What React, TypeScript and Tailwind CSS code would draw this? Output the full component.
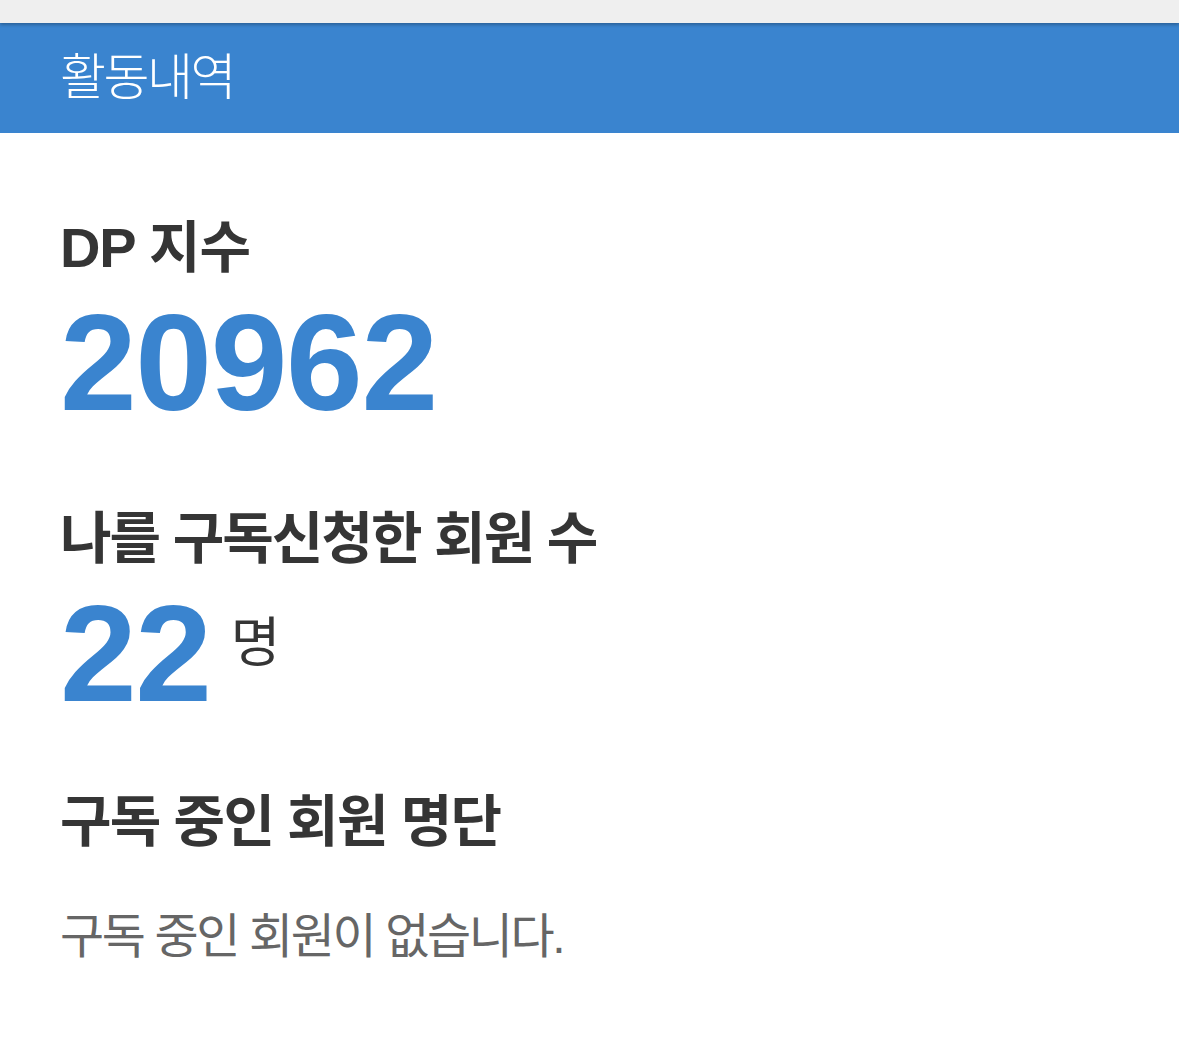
import React from 'react';

const font = { fontFamily: '"Liberation Sans", "Noto Sans CJK KR", sans-serif' };

const App: React.FC = () => {
  return (
    <div className="min-h-screen bg-white" style={font}>
      {/* top strip */}
      <div className="h-[23px] bg-[#efefef] shadow-[0_2px_3px_rgba(0,0,0,0.25)] relative z-10" />

      {/* Header */}
      <div className="h-[110px] bg-[#3a84cf] flex items-center px-[60px]">
        <h1 className="text-white text-[50px] font-light leading-none tracking-[-0.05em]">활동내역</h1>
      </div>

      <div className="px-[60px] pt-[87px]">
        <h2 className="text-[#353535] text-[56px] font-bold leading-none tracking-[-0.02em]">DP 지수</h2>
        <div className="text-[#3a84cf] text-[138px] font-bold leading-none mt-[17px] tracking-[-0.01em]">20962</div>

        <h2 className="text-[#353535] text-[56px] font-bold leading-none mt-[80px] tracking-[-0.035em]">
          나를 구독신청한 회원 수
        </h2>
        <div className="flex items-start mt-[17px]">
          <span className="text-[#3a84cf] text-[138px] font-bold leading-none tracking-[-0.01em]">22</span>
          <span className="text-[#353535] text-[54px] leading-none ml-[20px] mt-[32px]">명</span>
        </div>

        <h2 className="text-[#353535] text-[56px] font-bold leading-none mt-[72px] tracking-[-0.03em]">
          구독 중인 회원 명단
        </h2>
        <p className="text-[#666666] text-[48px] leading-none mt-[63px] tracking-[-0.05em]">
          구독 중인 회원이 없습니다.
        </p>
      </div>
    </div>
  );
};

export default App;
